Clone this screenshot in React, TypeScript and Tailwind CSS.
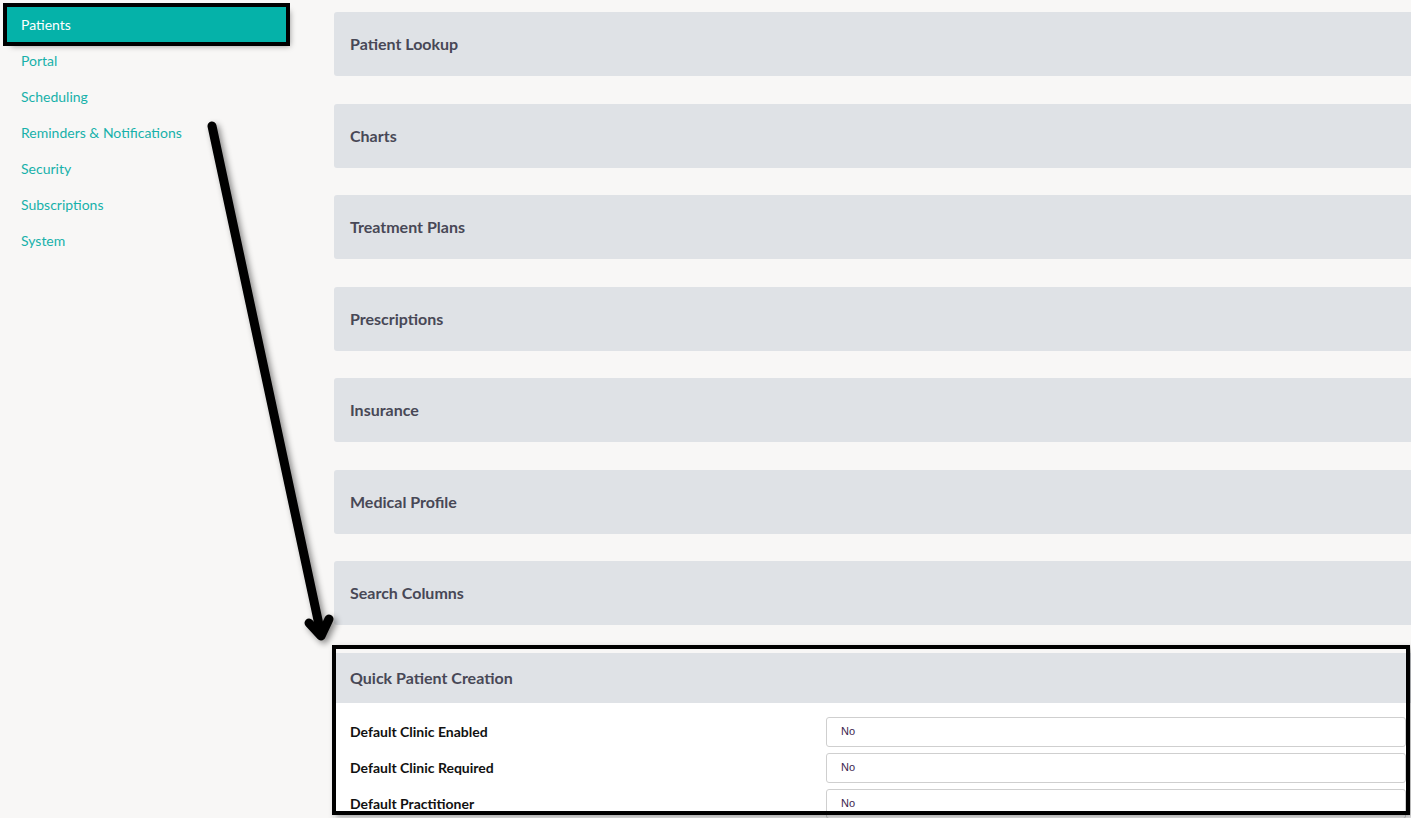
import React from 'react';

const navItems = ['Patients', 'Portal', 'Scheduling', 'Reminders & Notifications', 'Security', 'Subscriptions', 'System'];

const sections = ['Patient Lookup', 'Charts', 'Treatment Plans', 'Prescriptions', 'Insurance', 'Medical Profile', 'Search Columns'];

const settings = [
    { label: 'Default Clinic Enabled', value: 'No' },
    { label: 'Default Clinic Required', value: 'No' },
    { label: 'Default Practitioner', value: 'No' },
];

const App: React.FC = () => {
    return (
        <div className="relative flex h-[818px] w-full overflow-hidden bg-[#f8f7f6] font-['Lato','Noto_Sans',sans-serif]">
            {/* sidebar */}
            <aside className="w-[334px] shrink-0 pt-[7px]">
                <ul>
                    {navItems.map((item, i) =>
                        i === 0 ? (
                            <li
                                key={item}
                                className="ml-[7px] flex h-[35px] w-[279px] items-center bg-[#05b2a9] pl-[14px] text-[14px] text-white ring-4 ring-black shadow-[4px_4px_6px_rgba(0,0,0,0.4)]"
                            >
                                {item}
                            </li>
                        ) : (
                            <li key={item} className="flex h-9 items-center pl-[21px] text-[14px] text-[#17b1aa]">
                                {item}
                            </li>
                        )
                    )}
                </ul>
            </aside>

            {/* settings */}
            <main className="flex flex-1 flex-col gap-[27.5px] pt-3">
                {sections.map((title) => (
                    <div key={title} className="flex h-16 shrink-0 items-center rounded-l-[3px] bg-[#dfe2e6] pl-4">
                        <h2 className="text-[16px] font-bold text-[#484856]">{title}</h2>
                    </div>
                ))}

                <div className="shrink-0 bg-white">
                    <div className="flex h-[50px] items-center bg-[#dfe2e6] pl-4">
                        <h2 className="text-[16px] font-bold text-[#484856]">Quick Patient Creation</h2>
                    </div>
                    <div className="flex flex-col gap-[6px] pb-4 pl-4 pr-[5px] pt-[14px]">
                        {settings.map((row) => (
                            <div key={row.label} className="flex items-center">
                                <label className="w-[476px] shrink-0 text-[14px] font-bold text-[#111]">{row.label}</label>
                                <div className="flex h-[30px] flex-1 items-center rounded-[3px] border border-[#cfcfcf] bg-white pl-[14px] font-['Liberation_Sans',Arial,sans-serif] text-[11px] text-[#3d1f4f]">
                                    {row.value}
                                </div>
                            </div>
                        ))}
                    </div>
                </div>
            </main>

            {/* annotation box round Quick Patient Creation */}
            <div className="pointer-events-none absolute left-[332px] top-[645px] h-[170px] w-[1078px] border-4 border-black shadow-[3px_3px_6px_rgba(0,0,0,0.35)]" />

            {/* annotation arrow */}
            <svg className="pointer-events-none absolute left-0 top-0 drop-shadow-[3px_3px_3px_rgba(0,0,0,0.45)]" width="400" height="700" viewBox="0 0 400 700">
                <path d="M212 126 L321 634" stroke="#000" strokeWidth="9" strokeLinecap="round" fill="none" />
                <path d="M309 623 L321 636 L329 619" stroke="#000" strokeWidth="9" strokeLinecap="round" strokeLinejoin="round" fill="none" />
            </svg>
        </div>
    );
};

export default App;
